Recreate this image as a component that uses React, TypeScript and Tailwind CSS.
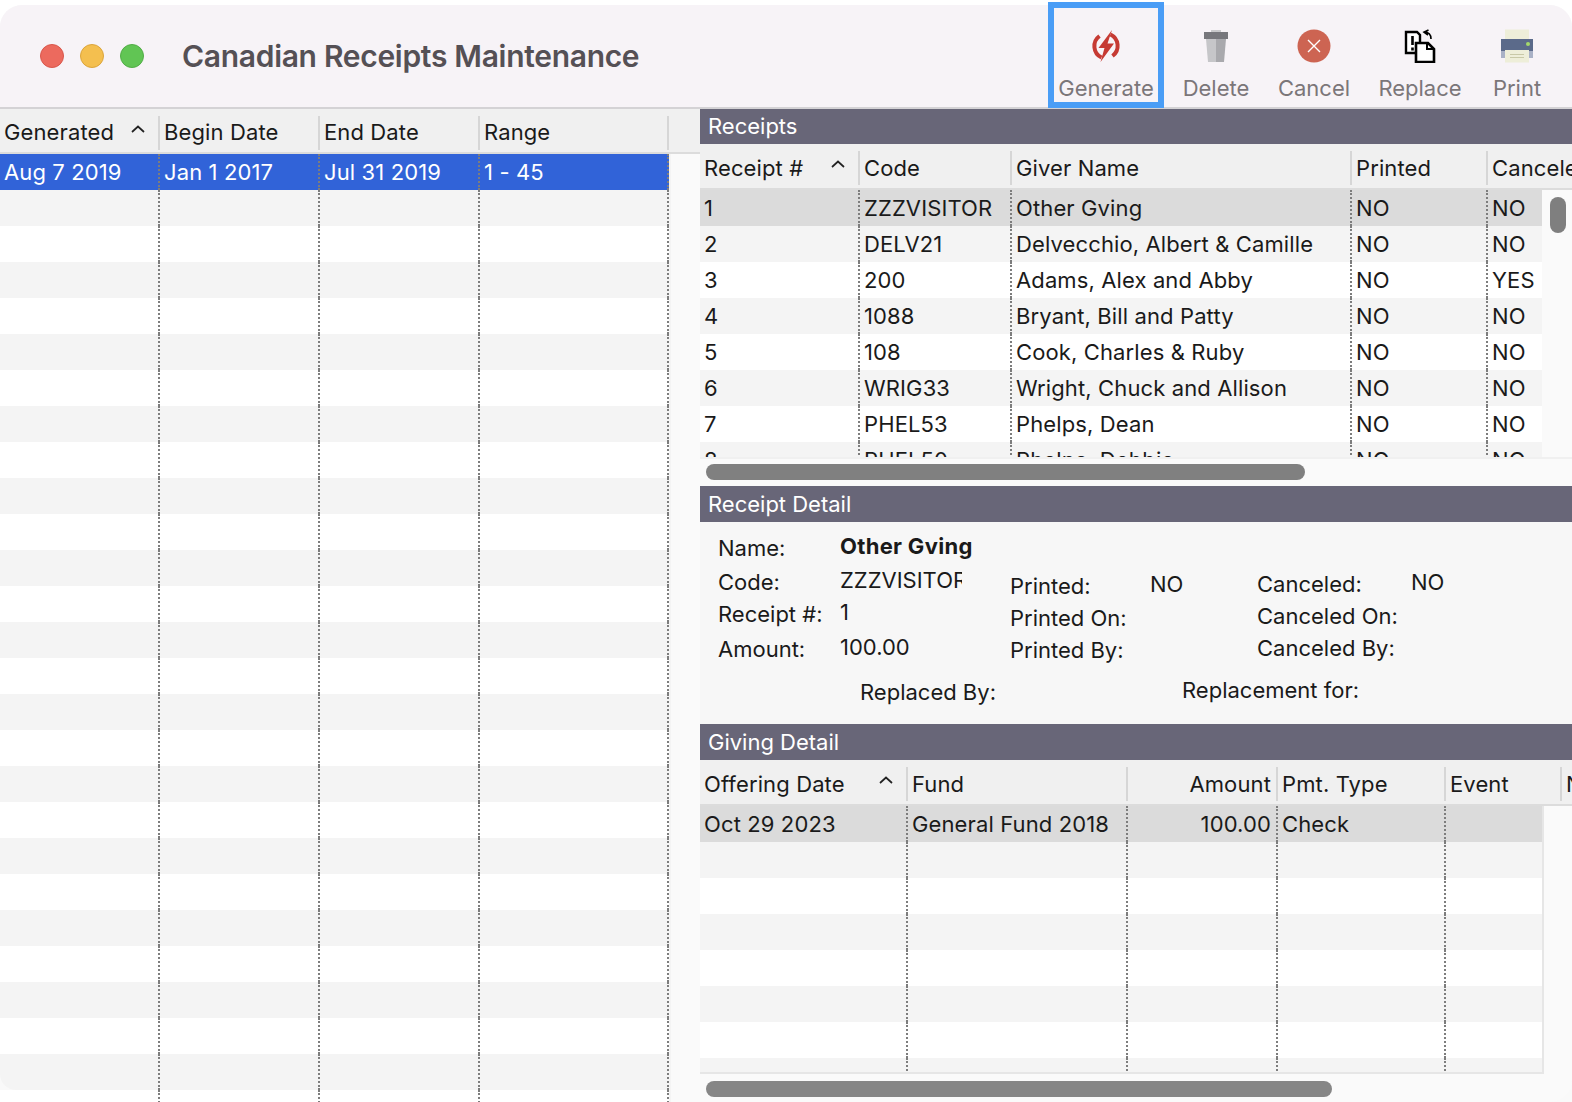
import { ReactNode } from "react";

const font = "font-['Inter','Liberation_Sans',sans-serif]";

type Col = { label: string; right?: boolean; sort?: boolean };

const leftCols: Col[] = [
  { label: "Generated", sort: true },
  { label: "Begin Date" },
  { label: "End Date" },
  { label: "Range" },
  { label: "" },
];

const receiptCols: Col[] = [
  { label: "Receipt #", sort: true },
  { label: "Code" },
  { label: "Giver Name" },
  { label: "Printed" },
  { label: "Canceled" },
];

const givingCols: Col[] = [
  { label: "Offering Date", sort: true },
  { label: "Fund" },
  { label: "Amount", right: true },
  { label: "Pmt. Type" },
  { label: "Event" },
  { label: "Notes" },
];

const receipts = [
  ["1", "ZZZVISITOR", "Other Gving", "NO", "NO"],
  ["2", "DELV21", "Delvecchio, Albert & Camille", "NO", "NO"],
  ["3", "200", "Adams, Alex and Abby", "NO", "YES"],
  ["4", "1088", "Bryant, Bill and Patty", "NO", "NO"],
  ["5", "108", "Cook, Charles & Ruby", "NO", "NO"],
  ["6", "WRIG33", "Wright, Chuck and Allison", "NO", "NO"],
  ["7", "PHEL53", "Phelps, Dean", "NO", "NO"],
  ["8", "PHEL50", "Phelps, Debbie", "NO", "NO"],
];

function SortCaret() {
  return (
    <svg viewBox="0 0 14 8" className="mb-[8px] h-[8px] w-[14px] shrink-0">
      <path d="M1 7 L7 1.5 L13 7" fill="none" stroke="#222" strokeWidth="1.7" />
    </svg>
  );
}

function Header({ cols, grid, height = "h-[45px]" }: { cols: Col[]; grid: string; height?: string }) {
  return (
    <div className={`grid ${grid} ${height} shrink-0 items-center overflow-hidden border-b-2 border-[#dcdcdc] bg-[#f0f0f0] pt-[4px] tracking-[0.12px]`}>
      {cols.map((c, i) => (
        <div
          key={c.label}
          className={`flex h-[34px] items-center overflow-hidden whitespace-nowrap pl-[4px] ${
            i > 0 ? "border-l-2 border-[#d6d6d6]" : ""
          } ${c.right ? "justify-end pr-[5px]" : "justify-between pr-[13px]"}`}
        >
          {c.label}
          {c.sort && <SortCaret />}
        </div>
      ))}
    </div>
  );
}

function Rows({
  rows,
  grid,
  count,
  selected,
  rightAlign = -1,
  lastRule = false,
  roundedRow = -1,
}: {
  rows: string[][];
  grid: string;
  count: number;
  selected: string;
  rightAlign?: number;
  lastRule?: boolean;
  roundedRow?: number;
}) {
  const width = rows[0].length;
  return (
    <>
      {Array.from({ length: count }).map((_, r) => {
        const row = rows[r];
        const bg = r === 0 ? selected : r % 2 ? "bg-[#f4f4f4]" : "bg-white";
        return (
          <div
            key={r}
            className={`grid ${grid} h-[36px] shrink-0 tracking-[0.12px] ${bg} ${r === roundedRow ? "rounded-bl-[16px]" : ""}`}
          >
            {Array.from({ length: width }).map((_, c) => (
              <div
                key={c}
                className={`overflow-hidden whitespace-nowrap pl-[4px] leading-[36px] ${
                  c > 0 ? "border-l-2 border-dotted border-[#7d7d7d]" : ""
                } ${lastRule && c === width - 1 ? "border-r-2" : ""} ${c === rightAlign ? "pr-[5px] text-right" : ""}`}
              >
                {row ? row[c] : ""}
              </div>
            ))}
          </div>
        );
      })}
    </>
  );
}

function SectionBar({ children, height = "h-[36px]" }: { children: ReactNode; height?: string }) {
  return (
    <div className={`flex ${height} shrink-0 items-center bg-[#686678] pl-[8px] text-white`}>{children}</div>
  );
}

function ToolButton({
  label,
  icon,
  className,
  focused = false,
}: {
  label: string;
  icon: ReactNode;
  className: string;
  focused?: boolean;
}) {
  return (
    <div
      className={`flex h-[106px] flex-col items-center text-[22px] text-[#7b7679] ${className} ${
        focused ? "border-[6px] border-[#4a9df6] pt-[21px]" : "pt-[27px]"
      }`}
    >
      <div className="flex h-[34px] w-[34px] items-center justify-center">{icon}</div>
      <div className="mt-[11px] leading-[28px]">{label}</div>
    </div>
  );
}

const GenerateIcon = (
  <svg viewBox="0 0 34 34" className="h-[34px] w-[34px]">
    <path d="M10.5 7 A12.6 12.6 0 0 0 12.5 28.5" fill="none" stroke="#c63a33" strokeWidth="4" />
    <path d="M23.5 27 A12.6 12.6 0 0 0 21.5 5.5" fill="none" stroke="#c63a33" strokeWidth="4" />
    <path d="M23 1 L9.5 19 L15.5 19 L11.5 33 L25 14.5 L18.5 14.5 Z" fill="#c63a33" />
  </svg>
);

const TrashIcon = (
  <svg viewBox="0 0 34 34" className="h-[34px] w-[34px]">
    <rect x="12" y="1" width="10" height="3" fill="#c9c9cb" />
    <rect x="5" y="3" width="24" height="7" fill="#77777c" />
    <path d="M7 10 H17 V33 H9 Z" fill="#c6c6c9" />
    <path d="M17 10 H27 L25 33 H17 Z" fill="#a9a9ad" />
  </svg>
);

const CancelIcon = (
  <svg viewBox="0 0 34 34" className="h-[34px] w-[34px]">
    <circle cx="17" cy="17" r="16.5" fill="#cd6452" />
    <path d="M11 11 L23 23 M23 11 L11 23" stroke="#fff" strokeWidth="1.4" />
  </svg>
);

const ReplaceIcon = (
  <svg viewBox="0 0 34 34" className="h-[34px] w-[34px]">
    <path d="M3 3 H14 L17 6 V24 H3 Z" fill="#fff" stroke="#000" strokeWidth="2.4" />
    <path d="M9.5 7 V16 M9.5 18.5 V21.5" stroke="#000" strokeWidth="2.6" />
    <path d="M15 14 H25 L31 20 V33 H13 V14 Z" fill="#fff" stroke="#000" strokeWidth="2.6" />
    <path d="M24 13 V20 H31" fill="none" stroke="#000" strokeWidth="2" />
    <path d="M21 3 C25 3 28 5 28 10 M25.5 1 L21 3.2 L25 6" fill="none" stroke="#000" strokeWidth="1.6" />
  </svg>
);

const PrintIcon = (
  <svg viewBox="0 0 34 34" className="h-[34px] w-[34px]">
    <rect x="5" y="0.5" width="24" height="11" fill="#eeeed9" />
    <rect x="1" y="10" width="32" height="12" fill="#5b6a8a" />
    <rect x="1" y="22" width="32" height="7" fill="#a9b1c6" />
    <circle cx="28" cy="15" r="2" fill="#a5d96b" />
    <rect x="5" y="21" width="24" height="12.5" fill="#eeeed9" />
    <path d="M10 25.5 H24 M10 28.5 H24" stroke="#c9c9a8" strokeWidth="1" />
  </svg>
);

function Field({ label, value, w, valueClass = "" }: { label: string; value?: string; w: string; valueClass?: string }) {
  return (
    <div className="flex h-[28px] items-start">
      <div className={`${w} shrink-0 whitespace-nowrap`}>{label}</div>
      {value && <div className={`-mt-[2px] whitespace-nowrap ${valueClass}`}>{value}</div>}
    </div>
  );
}

export default function App() {
  return (
    <div className={`h-[1102px] w-[1572px] overflow-hidden bg-white pt-[5px] text-[22px] text-[#1a1a1a] ${font}`}>
      <div className="flex h-[1097px] w-full flex-col rounded-t-[22px] bg-[#f9f9f9]">
        {/* title bar */}
        <div className="flex h-[104px] shrink-0 items-start rounded-t-[22px] border-b-2 border-[#d4d2d5] bg-[#f7f3f7]">
          <div className="ml-[40px] mt-[39px] flex gap-[16px]">
            <div className="h-[24px] w-[24px] rounded-full border border-[#d9574c] bg-[#ec6a5e]" />
            <div className="h-[24px] w-[24px] rounded-full border border-[#dca53c] bg-[#f4bf4f]" />
            <div className="h-[24px] w-[24px] rounded-full border border-[#52ad47] bg-[#61c554]" />
          </div>
          <div className="ml-[38px] mt-[31px] whitespace-nowrap text-[30px] font-semibold leading-[40px] tracking-[-0.3px] text-[#555055]">
            Canadian Receipts Maintenance
          </div>
          <div className="ml-auto -mt-[3px] flex shrink-0 items-start">
            <ToolButton label="Generate" icon={GenerateIcon} focused className="w-[116px]" />
            <ToolButton label="Delete" icon={TrashIcon} className="w-[104px]" />
            <ToolButton label="Cancel" icon={CancelIcon} className="w-[92px]" />
            <ToolButton label="Replace" icon={ReplaceIcon} className="w-[120px]" />
            <ToolButton label="Print" icon={PrintIcon} className="mr-[18px] w-[74px]" />
          </div>
        </div>

        <div className="flex min-h-0 flex-1">
          {/* generated batches */}
          <div className="flex w-[700px] shrink-0 flex-col overflow-hidden">
            <Header cols={leftCols} grid="grid-cols-[158px_160px_160px_189px_33px]" />
            <div className="flex min-h-0 flex-1">
              <div className="flex w-[669px] shrink-0 flex-col overflow-hidden">
                <Rows
                  rows={[["Aug 7 2019", "Jan 1 2017", "Jul 31 2019", "1 - 45"]]}
                  grid="grid-cols-[158px_160px_160px_191px]"
                  count={27}
                  selected="bg-[#3163d8] text-white"
                  lastRule
                  roundedRow={25}
                />
              </div>
              <div className="flex-1 border-l-2 border-[#f4f4f4] bg-[#fafafa]" />
            </div>
          </div>

          {/* right side */}
          <div className="flex min-w-0 flex-1 flex-col overflow-hidden rounded-br-[22px]">
            <SectionBar height="h-[35px]">Receipts</SectionBar>
            <div className="overflow-hidden">
              <div className="w-[900px]">
                <Header cols={receiptCols} grid="grid-cols-[158px_152px_340px_136px_114px]" height="h-[46px]" />
              </div>
            </div>
            <div className="flex h-[267px] shrink-0 overflow-hidden">
              <div className="w-[842px] shrink-0 overflow-hidden">
                <Rows rows={receipts} grid="grid-cols-[158px_152px_340px_136px_56px]" count={8} selected="bg-[#dbdbdb]" />
              </div>
              <div className="flex-1 bg-[#fafafa] pl-[8px] pt-[7px]">
                <div className="h-[36px] w-[16px] rounded-full bg-[#7f7f7f]" />
              </div>
            </div>
            <div className="flex h-[29px] shrink-0 items-start border-t-2 border-[#f0f0f0] bg-[#fafafa] pl-[6px] pt-[5px]">
              <div className="h-[16px] w-[599px] rounded-full bg-[#808080]" />
            </div>

            <SectionBar>Receipt Detail</SectionBar>
            <div className="flex h-[202px] shrink-0 flex-col bg-[#f7f7f7] leading-[28px]">
              <div className="flex h-[152px] pt-[12px]">
                <div className="ml-[18px] flex w-[292px] shrink-0 flex-col">
                  <div className="h-[34px]">
                    <Field label="Name:" value="Other Gving" w="w-[122px]" valueClass="font-bold tracking-[0.3px]" />
                  </div>
                  <div className="h-[32px]">
                    <Field label="Code:" value="ZZZVISITOR" w="w-[122px]" valueClass="w-[122px] overflow-hidden" />
                  </div>
                  <div className="h-[35px]">
                    <Field label="Receipt #:" value="1" w="w-[122px]" />
                  </div>
                  <Field label="Amount:" value="100.00" w="w-[122px]" />
                </div>
                <div className="flex w-[247px] shrink-0 flex-col gap-[4px] pt-[38px]">
                  <Field label="Printed:" value="NO" w="w-[140px]" />
                  <Field label="Printed On:" w="w-[140px]" />
                  <Field label="Printed By:" w="w-[140px]" />
                </div>
                <div className="flex flex-col gap-[4px] pt-[36px]">
                  <Field label="Canceled:" value="NO" w="w-[154px]" />
                  <Field label="Canceled On:" w="w-[154px]" />
                  <Field label="Canceled By:" w="w-[154px]" />
                </div>
              </div>
              <div className="flex items-start pl-[160px] pt-[2px]">
                <div className="w-[322px] pt-[2px]">Replaced By:</div>
                <div>Replacement for:</div>
              </div>
            </div>

            <SectionBar>Giving Detail</SectionBar>
            <div className="overflow-hidden">
              <div className="w-[900px]">
                <Header cols={givingCols} grid="grid-cols-[206px_220px_150px_168px_116px_40px]" height="h-[46px]" />
              </div>
            </div>
            <div className="flex h-[268px] shrink-0 overflow-hidden">
              <div className="w-[844px] shrink-0 overflow-hidden border-b-2 border-r-2 border-[#e6e6e6]">
                <Rows
                  rows={[["Oct 29 2023", "General Fund 2018", "100.00", "Check", ""]]}
                  grid="grid-cols-[206px_220px_150px_168px_98px]"
                  count={8}
                  selected="bg-[#dbdbdb]"
                  rightAlign={2}
                />
              </div>
              <div className="flex-1 bg-[#fafafa]" />
            </div>
            <div className="h-[28px] shrink-0 bg-[#fafafa] pl-[6px] pt-[7px]">
              <div className="h-[16px] w-[626px] rounded-full bg-[#868686]" />
            </div>
          </div>
        </div>
      </div>
    </div>
  );
}
